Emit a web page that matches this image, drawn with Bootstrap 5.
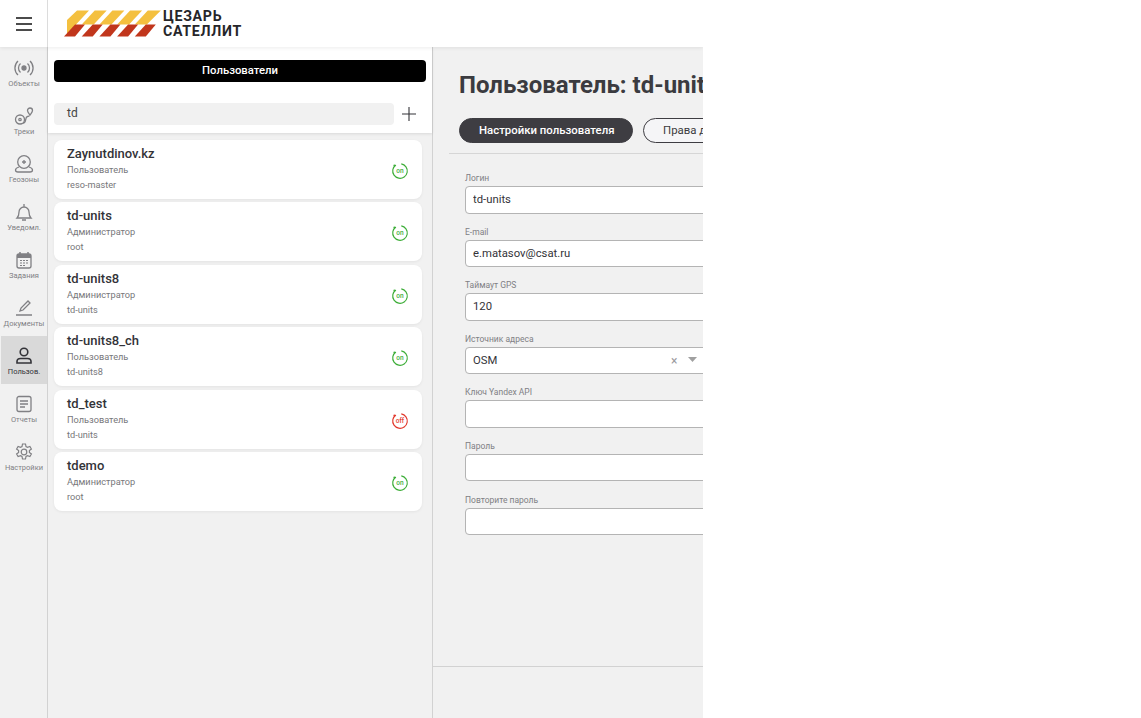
<!DOCTYPE html>
<html lang="ru">
<head>
<meta charset="UTF-8">
<meta name="viewport" content="width=device-width, initial-scale=1.0">
<title>Цезарь Сателлит</title>
<link href="https://cdn.jsdelivr.net/npm/bootstrap@5.3.0/dist/css/bootstrap.min.css" rel="stylesheet">
<style>
body { background: #fff; font-family: Roboto, "Liberation Sans", sans-serif; color: #333338; overflow: hidden; }
.app-shell { width: 703px; height: 718px; overflow: hidden; background: #f1f1f1; }
.top-bar { height: 47px; background: #fff; box-shadow: 0 1px 4px rgba(0,0,0,.08); position: relative; z-index: 2; }
.burger-box { width: 48px; border-right: 1px solid #dcdcdc; }
.brand-name { font-size: 14.2px; font-weight: 700; line-height: 15px; letter-spacing: .7px; color: #26262a; margin-left: 1px; }
.side-nav { width: 48px; padding-left: 1px; border-right: 1px solid #d2d2d2; padding-top: 1px; flex: none; }
.nav-cell { height: 48px; font-size: 7.5px; color: #808084; line-height: 10px; padding-top: 10px; }
.nav-cell svg { display: block; margin-bottom: 1px; }
.nav-cell.on-page { background: #d9d9d9; color: #333338; }
.users-col { width: 385px; flex: none; border-right: 1px solid #d2d2d2; }
.users-head { height: 86px; background: #fff; padding: 13px 6px 0; box-shadow: 0 1px 3px rgba(0,0,0,.1); }
.users-title { height: 22px; background: #000; color: #fff; font-size: 11.3px; font-weight: 500; line-height: 21px; border-radius: 4px; }
.search-row { margin-top: 21px; padding-right: 10px; }
.search-box { height: 22px; width: 340px; background: #f1f1f1; border-radius: 4px; font-size: 12px; line-height: 20px; padding-left: 13px; color: #444; }
.user-list { padding: 7px 10px 0 6px; gap: 3.4px; }
.user-card { height: 59px; border: 0; border-radius: 8px; padding: 6px 13px 0; box-shadow: 0 1px 3px rgba(0,0,0,.06); }
.user-name { font-size: 13px; font-weight: 500; line-height: 16px; color: #333338; }
.user-sub { font-size: 9.2px; line-height: 15px; color: #77777a; }
.user-status { position: absolute; right: 13px; top: 22px; }
.detail-col { width: 270px; flex: none; }
.detail-body { height: 620px; border-bottom: 1px solid #d2d2d2; }
.detail-title { font-size: 24px; font-weight: 700; line-height: 28px; white-space: nowrap; padding: 24px 0 0 26px; color: #3b3b40; margin: 0; }
.tab-row { padding: 19px 0 10px 10px; gap: 10px; border-bottom: 1px solid #d6d6d6; margin-left: 16px; }
.tab-btn { height: 25px; font-size: 11.4px; line-height: 23px; padding: 0 19px; white-space: nowrap; flex: none; border: 1px solid #3e3d42; color: #3b3b40; background: #f5f5f7; }
.tab-btn.tab-active { background: #3e3d42; color: #fff; font-weight: 500; width: 174px; }
.field-list { padding: 18px 0 0 32px; width: 600px; }
.field-row { height: 53.6px; }
.field-row label { display: block; font-size: 8.5px; line-height: 10px; color: #808084; margin: 0; padding: 1px 0 3px; }
.field-input { height: 27.5px; min-height: 0; border-radius: 4px; border: 1px solid #b4b4b4; font-size: 11.3px; padding: 0 7px; color: #333338; box-shadow: none; }
.select-mark { position: absolute; left: 206px; top: 19px; font-size: 12px; color: #9a9a9e; }
.caret-mark { position: absolute; left: 223px; top: 24px; }
</style>
</head>
<body>
<svg width="0" height="0" class="d-block">
<defs>
<symbol id="st-ring" viewBox="0 0 18 18"><circle cx="9" cy="9" r="7.3" fill="none" stroke="currentColor" stroke-width="1.2" stroke-dasharray="40 6" transform="rotate(-80 9 9)"/><circle cx="3.3" cy="3.5" r=".9" fill="currentColor"/></symbol>
</defs>
</svg>
<div class="app-shell d-flex flex-column">
  <div class="top-bar d-flex">
    <div class="burger-box d-flex align-items-center justify-content-center">
      <svg width="16" height="14" viewBox="0 0 16 14"><path d="M0 1h16M0 7h16M0 13h16" stroke="#111" stroke-width="1.6"/></svg>
    </div>
    <div class="d-flex align-items-center ms-3">
      <svg width="98" height="28" viewBox="0 0 98 28">
        <g fill="#f4c03f">
          <polygon points="13,.5 25,.5 12,14.500 12,23 3,23 3,10"/>
          <polygon points="30.700,.5 42.700,.5 29.700,14.500 17.700,14.500"/>
          <polygon points="48.400,.5 60.400,.5 47.400,14.500 35.400,14.500"/>
          <polygon points="66.100,.5 78.100,.5 65.100,14.500 53.100,14.500"/>
          <polygon points="83.800,.5 96.800,.5 82.800,14.500 70.800,14.500"/>
        </g>
        <g fill="#c1361c">
          <polygon points="11,14.500 21,14.500 11,26.500 0,26.500"/>
          <polygon points="28.700,14.500 38.700,14.500 28.700,26.500 17.700,26.500"/>
          <polygon points="46.400,14.500 56.400,14.500 46.400,26.500 35.400,26.500"/>
          <polygon points="64.100,14.500 74.100,14.500 64.100,26.500 53.100,26.500"/>
          <polygon points="81.800,14.500 91.800,14.500 81.800,26.500 70.800,26.500"/>
        </g>
      </svg>
      <div class="brand-name">ЦЕЗАРЬ<br>САТЕЛЛИТ</div>
    </div>
  </div>
  <div class="d-flex flex-grow-1">
    <nav class="side-nav">
      <div class="nav-cell d-flex flex-column align-items-center">
        <svg width="20" height="20" viewBox="0 0 20 20" fill="none" stroke="#808084" stroke-width="1.3"><circle cx="10" cy="10" r="2" fill="#808084"/><path d="M6.500 5.500a6 6 0 0 0 0 9M13.500 5.500a6 6 0 0 1 0 9M4 3a9.500 9.500 0 0 0 0 14M16 3a9.500 9.500 0 0 1 0 14"/></svg>Объекты
      </div>
      <div class="nav-cell d-flex flex-column align-items-center">
        <svg width="20" height="20" viewBox="0 0 20 20" fill="none" stroke="#808084" stroke-width="1.3"><circle cx="6" cy="13.500" r="4.500"/><circle cx="6" cy="13.500" r="1.200"/><path d="M9 17c4 0 1.500-6 4.500-6.500 1 0 1.500 0 2-1"/><path d="M16 9c-1.500-2-2.500-3-2.500-4.500a2.500 2.500 0 0 1 5 0C18.500 6 17.500 7 16 9z"/></svg>Треки
      </div>
      <div class="nav-cell d-flex flex-column align-items-center">
        <svg width="20" height="20" viewBox="0 0 20 20" fill="none" stroke="#808084" stroke-width="1.3"><circle cx="10" cy="8" r="6.300"/><path d="M10 6v4M8 8h4"/><path d="M5 13c-2 .6-3.500 1.600-3.500 3 0 1 1 2 2.500 2h12c1.500 0 2.500-1 2.500-2 0-1.400-1.500-2.400-3.500-3"/></svg>Геозоны
      </div>
      <div class="nav-cell d-flex flex-column align-items-center">
        <svg width="20" height="20" viewBox="0 0 20 20" fill="none" stroke="#808084" stroke-width="1.3"><path d="M3 16c1.500-1.500 2-3 2-6a5 5 0 0 1 10 0c0 3 .5 4.500 2 6zM10 2v3M8 18h4"/></svg>Уведомл.
      </div>
      <div class="nav-cell d-flex flex-column align-items-center">
        <svg width="20" height="20" viewBox="0 0 20 20"><rect x="3" y="4" width="14" height="14" rx="2" fill="none" stroke="#808084" stroke-width="1.3"/><path d="M3 4h14v4H3z" fill="#808084"/><path d="M6 2v3M14 2v3" stroke="#808084" stroke-width="1.500"/><path d="M6 10.500h2M9 10.500h2M12 10.500h2M6 13h2M9 13h2M12 13h2M6 15.500h2M9 15.500h2" stroke="#808084" stroke-width="1.200"/></svg>Задания
      </div>
      <div class="nav-cell d-flex flex-column align-items-center">
        <svg width="20" height="20" viewBox="0 0 20 20" fill="none" stroke="#808084" stroke-width="1.3"><path d="M6 13l1-3 7-7 2 2-7 7zM2 17h16"/></svg>Документы
      </div>
      <div class="nav-cell on-page d-flex flex-column align-items-center">
        <svg width="20" height="20" viewBox="0 0 20 20" fill="none" stroke="#333338" stroke-width="1.600"><circle cx="10" cy="6" r="3.800"/><path d="M3 17v-1.500c0-2 1.500-3 3.500-3h7c2 0 3.500 1 3.500 3V17z"/></svg>Пользов.
      </div>
      <div class="nav-cell d-flex flex-column align-items-center">
        <svg width="20" height="20" viewBox="0 0 20 20" fill="none" stroke="#808084" stroke-width="1.3"><rect x="3" y="2.500" width="14" height="15" rx="2"/><path d="M6 7h8M6 10h8M6 13h5"/></svg>Отчеты
      </div>
      <div class="nav-cell d-flex flex-column align-items-center">
        <svg width="20" height="20" viewBox="0 0 20 20" fill="none" stroke="#808084" stroke-width="1.200"><circle cx="10" cy="10" r="2.800"/><path d="M8.500 2h3l.5 2.500 1.500.8 2.400-.9 1.500 2.600-2 1.600v1.800l2 1.600-1.500 2.600-2.400-.9-1.500.8-.5 2.500h-3l-.5-2.500-1.500-.8-2.400.9-1.500-2.600 2-1.600V8.600l-2-1.600 1.500-2.600 2.400.9 1.500-.8z"/></svg>Настройки
      </div>
    </nav>
    <section class="users-col">
      <div class="users-head">
        <div class="users-title text-center">Пользователи</div>
        <div class="search-row d-flex align-items-center justify-content-between">
          <div class="search-box">td</div>
          <svg width="14" height="14" viewBox="0 0 14 14"><path d="M7 0v14M0 7h14" stroke="#333338" stroke-width="1.100"/></svg>
        </div>
      </div>
      <div class="user-list d-flex flex-column">
        <div class="card user-card position-relative">
          <div class="user-name">Zaynutdinov.kz</div>
          <div class="user-sub">Пользователь</div>
          <div class="user-sub">reso-master</div>
          <svg class="user-status" width="18" height="18" viewBox="0 0 18 18" color="#3fae3a"><use href="#st-ring"/><text x="9" y="11.300" font-size="6.500" font-weight="500" text-anchor="middle" fill="currentColor">on</text></svg>
        </div>
        <div class="card user-card position-relative">
          <div class="user-name">td-units</div>
          <div class="user-sub">Администратор</div>
          <div class="user-sub">root</div>
          <svg class="user-status" width="18" height="18" viewBox="0 0 18 18" color="#3fae3a"><use href="#st-ring"/><text x="9" y="11.300" font-size="6.500" font-weight="500" text-anchor="middle" fill="currentColor">on</text></svg>
        </div>
        <div class="card user-card position-relative">
          <div class="user-name">td-units8</div>
          <div class="user-sub">Администратор</div>
          <div class="user-sub">td-units</div>
          <svg class="user-status" width="18" height="18" viewBox="0 0 18 18" color="#3fae3a"><use href="#st-ring"/><text x="9" y="11.300" font-size="6.500" font-weight="500" text-anchor="middle" fill="currentColor">on</text></svg>
        </div>
        <div class="card user-card position-relative">
          <div class="user-name">td-units8_ch</div>
          <div class="user-sub">Пользователь</div>
          <div class="user-sub">td-units8</div>
          <svg class="user-status" width="18" height="18" viewBox="0 0 18 18" color="#3fae3a"><use href="#st-ring"/><text x="9" y="11.300" font-size="6.500" font-weight="500" text-anchor="middle" fill="currentColor">on</text></svg>
        </div>
        <div class="card user-card position-relative">
          <div class="user-name">td_test</div>
          <div class="user-sub">Пользователь</div>
          <div class="user-sub">td-units</div>
          <svg class="user-status" width="18" height="18" viewBox="0 0 18 18" color="#e23a2e"><use href="#st-ring"/><text x="9" y="11.300" font-size="6.500" font-weight="500" text-anchor="middle" fill="currentColor">off</text></svg>
        </div>
        <div class="card user-card position-relative">
          <div class="user-name">tdemo</div>
          <div class="user-sub">Администратор</div>
          <div class="user-sub">root</div>
          <svg class="user-status" width="18" height="18" viewBox="0 0 18 18" color="#3fae3a"><use href="#st-ring"/><text x="9" y="11.300" font-size="6.500" font-weight="500" text-anchor="middle" fill="currentColor">on</text></svg>
        </div>
      </div>
    </section>
    <section class="detail-col">
      <div class="detail-body">
        <h1 class="detail-title">Пользователь: td-units</h1>
        <div class="tab-row d-flex">
          <div class="tab-btn tab-active rounded-pill text-center">Настройки пользователя</div>
          <div class="tab-btn rounded-pill">Права доступа</div>
        </div>
        <form class="field-list">
          <div class="field-row"><label>Логин</label><input class="form-control field-input" value="td-units"></div>
          <div class="field-row"><label>E-mail</label><input class="form-control field-input" value="e.matasov@csat.ru"></div>
          <div class="field-row"><label>Таймаут GPS</label><input class="form-control field-input" value="120"></div>
          <div class="field-row position-relative"><label>Источник адреса</label><input class="form-control field-input" value="OSM">
            <span class="select-mark">×</span>
            <svg class="caret-mark" width="9" height="5" viewBox="0 0 9 5"><path d="M0 0h9L4.500 5z" fill="#a0a0a0"/></svg>
          </div>
          <div class="field-row"><label>Ключ Yandex API</label><input class="form-control field-input"></div>
          <div class="field-row"><label>Пароль</label><input class="form-control field-input"></div>
          <div class="field-row"><label>Повторите пароль</label><input class="form-control field-input"></div>
        </form>
      </div>
    </section>
  </div>
</div>
<script src="https://cdn.jsdelivr.net/npm/bootstrap@5.3.0/dist/js/bootstrap.bundle.min.js"></script>
</body>
</html>
